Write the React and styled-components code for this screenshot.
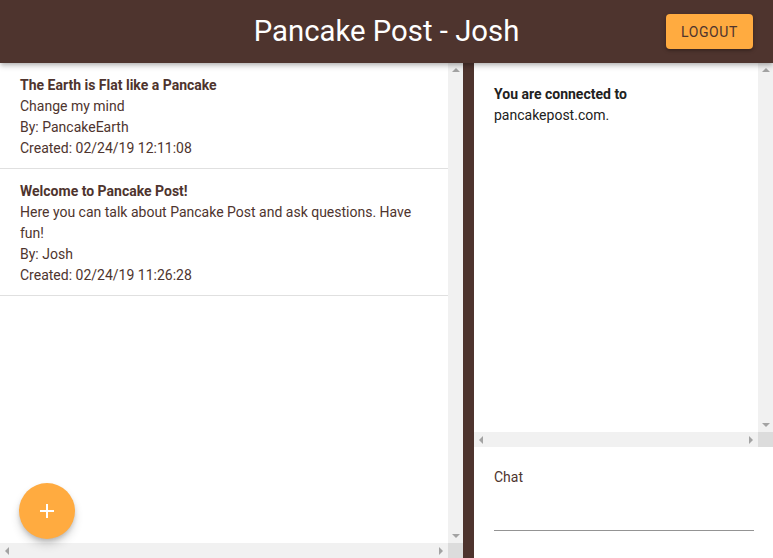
import React from 'react'
import styled, { createGlobalStyle, css } from 'styled-components'

const GlobalStyle = createGlobalStyle`
	html, body {
		margin: 0;
		padding: 0;
		height: 100%;
		overflow: hidden;
	}
	body {
		background: #4e342e;
		font-family: Roboto, 'Liberation Sans', sans-serif;
	}
	#root {
		height: 100%;
	}
`

const Page = styled.div`
	display: flex;
	flex-direction: column;
	height: 558px;
`
const Header = styled.header`
	position: relative;
	z-index: 2;
	height: 63px;
	flex-shrink: 0;
	display: flex;
	align-items: center;
	justify-content: center;
	background: #4e342e;
	box-shadow: 0 2px 4px -1px rgba(0, 0, 0, 0.2), 0 4px 5px 0 rgba(0, 0, 0, 0.14);
`
const Title = styled.h1`
	margin: 0 0 2px;
	color: #fff;
	font-size: 29.3px;
	font-weight: 400;
`
const LogoutButton = styled.button`
	position: absolute;
	right: 20px;
	top: 14px;
	width: 87px;
	height: 35px;
	border: none;
	border-radius: 4px;
	background: #ffab40;
	color: #4e342e;
	font-family: inherit;
	font-size: 14px;
	font-weight: 400;
	letter-spacing: 0.6px;
	box-shadow: 0 1px 5px rgba(0, 0, 0, 0.2), 0 2px 2px rgba(0, 0, 0, 0.14);
`
const Main = styled.div`
	flex: 1;
	display: flex;
	gap: 11px;
	min-height: 0;
`

/* fake classic scrollbars, since the page is shot without real ones */
const ScrollArea = styled.div`
	display: grid;
	grid-template-columns: 1fr 15px;
	grid-template-rows: 1fr 15px;
	min-height: 0;
	min-width: 0;
	background: #fff;
`
const Track = styled.div`
	background: #f1f1f1;
	display: flex;
	justify-content: space-between;
	align-items: center;
	${(p) =>
		p.$vertical
			? css`
					flex-direction: column;
					padding: 5px 0;
			  `
			: css`
					flex-direction: row;
					padding: 0 5px;
			  `}
`
const Corner = styled.div`
	background: #dcdcdc;
`
const Arrow = styled.span`
	width: 0;
	height: 0;
	border: 4px solid transparent;
	${(p) => p.$dir === 'up' && css`border-bottom: 4px solid #a3a3a3; border-top-width: 0; margin-left: 1px;`}
	${(p) => p.$dir === 'down' && css`border-top: 4px solid #a3a3a3; border-bottom-width: 0; margin-left: 1px;`}
	${(p) => p.$dir === 'left' && css`border-right: 4px solid #a3a3a3; border-left-width: 0;`}
	${(p) => p.$dir === 'right' && css`border-left: 4px solid #a3a3a3; border-right-width: 0;`}
`

const PostsPanel = styled(ScrollArea)`
	position: relative;
	width: 463px;
	flex-shrink: 0;
`
const PostList = styled.ul`
	margin: 0;
	padding: 0;
	list-style: none;
	overflow: hidden;
`
const PostItem = styled.li`
	padding: 12px 20px 9px;
	border-bottom: 1px solid #e0e0e0;
	color: #4e342e;
	font-size: 14px;
	line-height: 21px;
`
const PostTitle = styled.div`
	font-weight: 700;
`
const Fab = styled.button`
	position: absolute;
	left: 19px;
	bottom: 19px;
	width: 56px;
	height: 56px;
	border: none;
	border-radius: 50%;
	background: #ffab40;
	display: flex;
	align-items: center;
	justify-content: center;
	box-shadow: 0 3px 5px -1px rgba(0, 0, 0, 0.2), 0 6px 10px 0 rgba(0, 0, 0, 0.14);
`
const ChatPanel = styled.div`
	flex: 1;
	display: flex;
	flex-direction: column;
	min-width: 0;
`
const ChatLogArea = styled(ScrollArea)`
	height: 384px;
	flex-shrink: 0;
`
const ChatLog = styled.div`
	padding: 21px 20px;
	font-size: 14px;
	line-height: 21px;
	color: #212121;
`
const ChatForm = styled.div`
	flex: 1;
	background: #fff;
	padding: 20px 19px 0 20px;
`
const ChatLabel = styled.label`
	display: block;
	color: #4e342e;
	font-size: 14px;
	line-height: 20px;
`
const ChatInput = styled.input`
	display: block;
	width: 100%;
	box-sizing: border-box;
	margin-top: 14px;
	height: 30px;
	border: none;
	border-bottom: 1px solid #949494;
	outline: none;
	font-family: inherit;
	font-size: 14px;
	background: transparent;
`

const posts = [
	{
		title: 'The Earth is Flat like a Pancake',
		body: 'Change my mind',
		author: 'PancakeEarth',
		created: '02/24/19 12:11:08',
	},
	{
		title: 'Welcome to Pancake Post!',
		body: 'Here you can talk about Pancake Post and ask questions. Have fun!',
		author: 'Josh',
		created: '02/24/19 11:26:28',
	},
]

const Scrollbars = ({ children }) => (
	<>
		{children}
		<Track $vertical>
			<Arrow $dir='up' />
			<Arrow $dir='down' />
		</Track>
		<Track>
			<Arrow $dir='left' />
			<Arrow $dir='right' />
		</Track>
		<Corner />
	</>
)

export default function App() {
	return (
		<Page>
			<GlobalStyle />
			<Header>
				<Title>Pancake Post - Josh</Title>
				<LogoutButton>LOGOUT</LogoutButton>
			</Header>
			<Main>
				<PostsPanel>
					<Scrollbars>
						<PostList>
							{posts.map((post) => (
								<PostItem key={post.title}>
									<PostTitle>{post.title}</PostTitle>
									<div>{post.body}</div>
									<div>By: {post.author}</div>
									<div>Created: {post.created}</div>
								</PostItem>
							))}
						</PostList>
					</Scrollbars>
					<Fab aria-label='add'>
						<svg width='16' height='16' viewBox='0 0 16 16'>
							<path d='M8 1v14M1 8h14' stroke='#fff' strokeWidth='2' />
						</svg>
					</Fab>
				</PostsPanel>
				<ChatPanel>
					<ChatLogArea>
						<Scrollbars>
							<ChatLog>
								<b>You are connected to</b>
								<div>pancakepost.com.</div>
							</ChatLog>
						</Scrollbars>
					</ChatLogArea>
					<ChatForm>
						<ChatLabel htmlFor='chat'>Chat</ChatLabel>
						<ChatInput id='chat' />
					</ChatForm>
				</ChatPanel>
			</Main>
		</Page>
	)
}
